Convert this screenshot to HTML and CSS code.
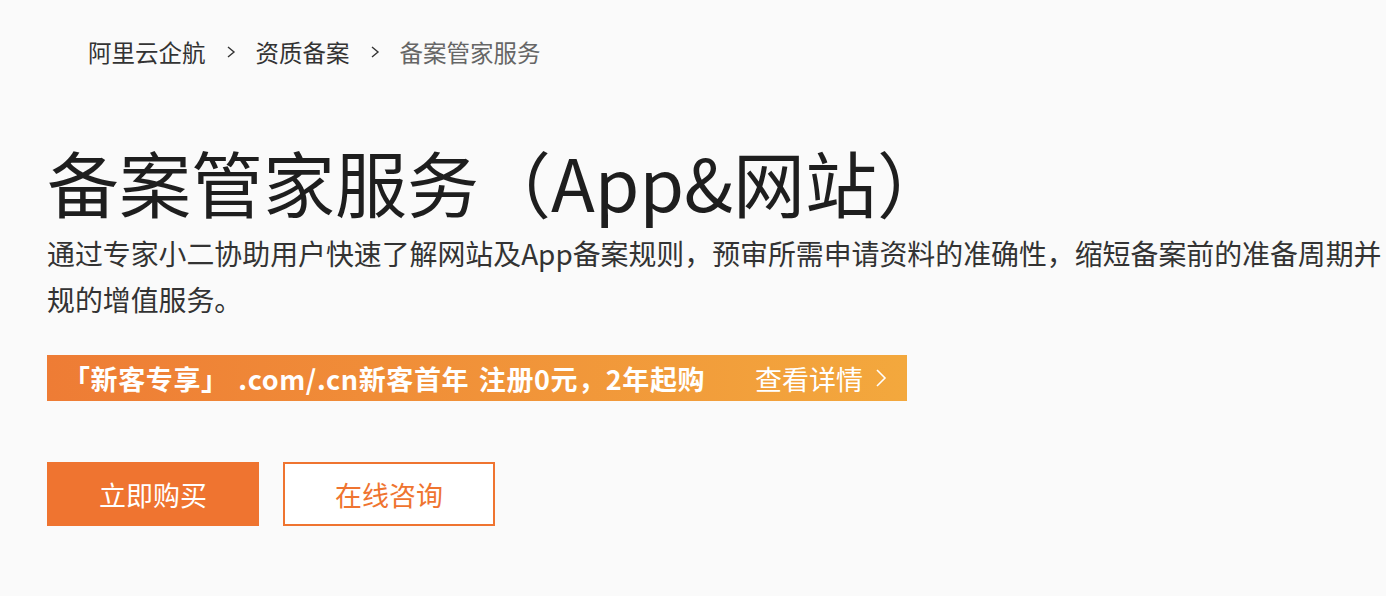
FILE: index.html
```html
<!DOCTYPE html>
<html>
<head>
  <meta charset="utf-8">
  <title>备案管家服务</title>
  <link rel="stylesheet" href="styles.css">
</head>
<body>
  <div class="banner-area">
    <div class="crumbs">
      <a href="#">阿里云企航</a>
      <svg class="crumb-sep" width="10" height="14" viewBox="0 0 10 14"><polyline points="2,2 8,7 2,12" fill="none" stroke="#333" stroke-width="1.4"/></svg>
      <a href="#">资质备案</a>
      <svg class="crumb-sep" width="10" height="14" viewBox="0 0 10 14"><polyline points="2,2 8,7 2,12" fill="none" stroke="#333" stroke-width="1.4"/></svg>
      <span class="current">备案管家服务</span>
    </div>

    <h1 class="title">备案管家服务（App&amp;网站）</h1>
    <p class="desc">通过专家小二协助用户快速了解网站及App备案规则，预审所需申请资料的准确性，缩短备案前的准备周期并规的增值服务。</p>

    <a class="promo" href="#">
      <span class="promo-text">「新客专享」 .com/.cn新客首年 注册0元，2年起购</span>
      <span class="promo-more">查看详情
        <svg width="12" height="20" viewBox="0 0 12 20"><polyline points="2,2 10,10 2,18" fill="none" stroke="#fff" stroke-width="1.6"/></svg>
      </span>
    </a>

    <div class="actions">
      <button class="btn btn-primary">立即购买</button>
      <button class="btn btn-outline">在线咨询</button>
    </div>
  </div>
</body>
</html>
```

FILE: styles.css
```css
html, body {
  margin: 0;
  padding: 0;
  overflow: hidden;
}
body {
  background-color: #fafafa;
  font-family: "Noto Sans CJK SC", "Noto Sans", sans-serif;
  color: #333;
}
.banner-area {
  padding-left: 47px;
}

.crumbs {
  display: flex;
  align-items: center;
  gap: 20px;
  margin-top: 32px;
  padding-left: 41px;
  height: 40px;
  font-size: 23.5px;
}
.crumbs a {
  color: #333;
  text-decoration: none;
}
.crumbs .current {
  color: #666;
}
.crumb-sep {
  display: block;
}

.title {
  margin: 64px 0 0;
  font-size: 72px;
  line-height: 90px;
  font-weight: 400;
  color: #1e1e1e;
  white-space: nowrap;
}
.desc {
  width: 1339px;
  margin: 4px 0 0;
  font-size: 27.9px;
  line-height: 46px;
  color: #333;
}

.promo {
  display: flex;
  justify-content: space-between;
  align-items: center;
  width: 860px;
  height: 46px;
  margin-top: 33px;
  padding: 0 20px 0 16px;
  box-sizing: border-box;
  background: linear-gradient(90deg, #ee7c35, #f3a83d);
  color: #fff;
  text-decoration: none;
  font-size: 27px;
}
.promo-text {
  font-weight: 700;
  letter-spacing: 0.6px;
  word-spacing: 3px;
}
.promo-more {
  display: flex;
  align-items: center;
  gap: 12px;
}
.promo-more svg {
  display: block;
}

.actions {
  display: flex;
  gap: 24px;
  margin-top: 61px;
}
.btn {
  width: 212px;
  height: 64px;
  font-family: inherit;
  font-size: 27px;
  border-radius: 0;
  cursor: pointer;
}
.btn-primary {
  background-color: #ef7430;
  border: none;
  color: #fff;
}
.btn-outline {
  background-color: #fff;
  border: 2px solid #ef7430;
  color: #ef7430;
}
```
